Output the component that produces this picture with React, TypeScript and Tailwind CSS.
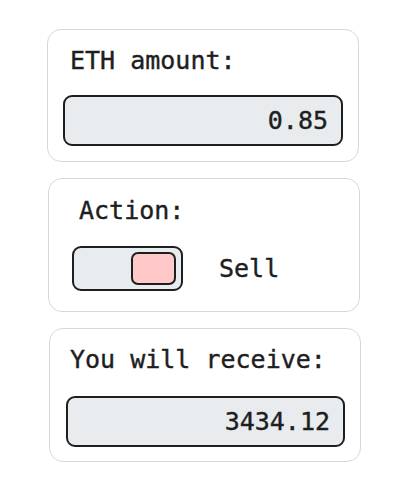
export default function App() {
  const mono = { fontFamily: '"DejaVu Sans Mono", "Liberation Mono", monospace' };
  return (
    <div
      className="min-h-[502px] w-[411px] bg-white pt-[29px] text-[#1e1e1e] [-webkit-text-stroke:0.4px_#1e1e1e]"
      style={mono}
    >
      <div className="ml-[47px] h-[133px] w-[312px] rounded-[14px] border-[1.5px] border-[#d6d9dc] px-[15px] pt-[16px]">
        <div className="pl-[7px] text-[25px] leading-[30px]">ETH amount:</div>
        <div className="mt-[19px] flex h-[51px] w-[280px] items-center justify-end rounded-[9px] border-2 border-[#1e1e1e] bg-[#e9ecef] pr-[13px] text-[25px]">
          0.85
        </div>
      </div>

      <div className="ml-[48px] mt-[16px] h-[134px] w-[312px] rounded-[14px] border-[1.5px] border-[#d6d9dc] pl-[23px] pt-[17px]">
        <div className="pl-[7px] text-[25px] leading-[30px]">Action:</div>
        <div className="mt-[20px] flex items-center gap-[36px]">
          <div className="flex h-[45px] w-[111px] items-center justify-end rounded-[9px] border-2 border-[#1e1e1e] bg-[#e9ecef] pr-[5px]">
            <div className="h-[33px] w-[45px] rounded-[7px] border-2 border-[#1e1e1e] bg-[#ffc9c9]" />
          </div>
          <span className="text-[25px] leading-[30px]">Sell</span>
        </div>
      </div>

      <div className="ml-[49px] mt-[16px] h-[134px] w-[312px] rounded-[14px] border-[1.5px] border-[#d6d9dc] px-[16px] pt-[16px]">
        <div className="pl-[4px] text-[25px] leading-[30px]">You will receive:</div>
        <div className="mt-[21px] flex h-[51px] w-[279px] items-center justify-end rounded-[9px] border-2 border-[#1e1e1e] bg-[#e9ecef] pr-[13px] text-[25px]">
          3434.12
        </div>
      </div>
    </div>
  );
}
